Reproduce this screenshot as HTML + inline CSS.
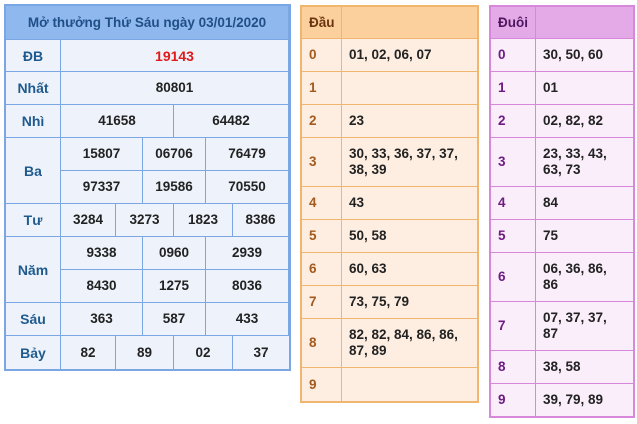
<!DOCTYPE html>
<html><head><meta charset="utf-8"><style>
body{margin:0;width:637px;height:424px;background:#fff;position:relative;overflow:hidden;font-family:"Liberation Sans",Arial,sans-serif;font-weight:bold;font-size:13.5px;color:#222}
.c{position:absolute;box-sizing:border-box;display:flex;align-items:center;justify-content:center;text-align:center;line-height:16px}
.L{background:#eef3fb;border-right:1px solid #7aa6e4;border-bottom:1px solid #7aa6e4}
.lab{color:#1f5a8e;font-size:14px}
.O{background:#fdeee1;border-right:1px solid #f0b56e;border-bottom:1px solid #f0b56e;justify-content:flex-start;padding-left:7px;text-align:left}
.P{background:#fbeefb;border-right:1px solid #d788da;border-bottom:1px solid #d788da;justify-content:flex-start;padding-left:7px;text-align:left}
.ol{color:#a35a1c}.pl{color:#6d1c82}
.box{position:absolute;box-sizing:border-box}
</style></head><body>
<div class="box" style="left:4px;top:4px;width:287px;height:367px;border:2px solid #7aa6e4"></div>
<div class="c L" style="left:6px;top:6px;width:283px;height:34px;background:#8fb8ef;color:#1f4f86;font-size:13.5px">Mở thưởng Thứ Sáu ngày 03/01/2020</div>
<div class="c L lab" style="left:6px;top:40px;width:55px;height:32px">ĐB</div>
<div class="c L" style="left:61px;top:40px;width:228px;height:32px;color:#e01a1a;font-size:14px">19143</div>
<div class="c L lab" style="left:6px;top:72px;width:55px;height:33px">Nhất</div>
<div class="c L" style="left:61px;top:72px;width:228px;height:33px">80801</div>
<div class="c L lab" style="left:6px;top:105px;width:55px;height:33px">Nhì</div>
<div class="c L" style="left:61px;top:105px;width:113px;height:33px">41658</div>
<div class="c L" style="left:174px;top:105px;width:115px;height:33px">64482</div>
<div class="c L lab" style="left:6px;top:138px;width:55px;height:66px">Ba</div>
<div class="c L" style="left:61px;top:138px;width:82px;height:33px">15807</div>
<div class="c L" style="left:143px;top:138px;width:63px;height:33px">06706</div>
<div class="c L" style="left:206px;top:138px;width:83px;height:33px">76479</div>
<div class="c L" style="left:61px;top:171px;width:82px;height:33px">97337</div>
<div class="c L" style="left:143px;top:171px;width:63px;height:33px">19586</div>
<div class="c L" style="left:206px;top:171px;width:83px;height:33px">70550</div>
<div class="c L lab" style="left:6px;top:204px;width:55px;height:33px">Tư</div>
<div class="c L" style="left:61px;top:204px;width:55px;height:33px">3284</div>
<div class="c L" style="left:116px;top:204px;width:58px;height:33px">3273</div>
<div class="c L" style="left:174px;top:204px;width:59px;height:33px">1823</div>
<div class="c L" style="left:233px;top:204px;width:56px;height:33px">8386</div>
<div class="c L lab" style="left:6px;top:237px;width:55px;height:66px">Năm</div>
<div class="c L" style="left:61px;top:237px;width:82px;height:33px">9338</div>
<div class="c L" style="left:143px;top:237px;width:63px;height:33px">0960</div>
<div class="c L" style="left:206px;top:237px;width:83px;height:33px">2939</div>
<div class="c L" style="left:61px;top:270px;width:82px;height:33px">8430</div>
<div class="c L" style="left:143px;top:270px;width:63px;height:33px">1275</div>
<div class="c L" style="left:206px;top:270px;width:83px;height:33px">8036</div>
<div class="c L lab" style="left:6px;top:303px;width:55px;height:33px">Sáu</div>
<div class="c L" style="left:61px;top:303px;width:82px;height:33px">363</div>
<div class="c L" style="left:143px;top:303px;width:63px;height:33px">587</div>
<div class="c L" style="left:206px;top:303px;width:83px;height:33px">433</div>
<div class="c L lab" style="left:6px;top:336px;width:55px;height:33px;border-bottom:0">Bảy</div>
<div class="c L" style="left:61px;top:336px;width:55px;height:33px;border-bottom:0">82</div>
<div class="c L" style="left:116px;top:336px;width:58px;height:33px;border-bottom:0">89</div>
<div class="c L" style="left:174px;top:336px;width:59px;height:33px;border-bottom:0">02</div>
<div class="c L" style="left:233px;top:336px;width:56px;height:33px;border-bottom:0;border-right:0">37</div>

<div class="box" style="left:300px;top:5px;width:179px;height:398px;border:2px solid #f0b56e"></div>
<div class="c O" style="left:302px;top:7px;width:40px;height:32px;background:#fbd09c;color:#6a3410">Đầu</div>
<div class="c O" style="left:342px;top:7px;width:135px;height:32px;background:#fbd09c;border-right:0"></div>
<div class="c O ol" style="left:302px;top:39px;width:40px;height:33px">0</div><div class="c O" style="left:342px;top:39px;width:135px;height:33px;border-right:0">01, 02, 06, 07</div>
<div class="c O ol" style="left:302px;top:72px;width:40px;height:33px">1</div><div class="c O" style="left:342px;top:72px;width:135px;height:33px;border-right:0"></div>
<div class="c O ol" style="left:302px;top:105px;width:40px;height:33px">2</div><div class="c O" style="left:342px;top:105px;width:135px;height:33px;border-right:0">23</div>
<div class="c O ol" style="left:302px;top:138px;width:40px;height:49px">3</div><div class="c O" style="left:342px;top:138px;width:135px;height:49px;border-right:0">30, 33, 36, 37, 37,<br>38, 39</div>
<div class="c O ol" style="left:302px;top:187px;width:40px;height:33px">4</div><div class="c O" style="left:342px;top:187px;width:135px;height:33px;border-right:0">43</div>
<div class="c O ol" style="left:302px;top:220px;width:40px;height:33px">5</div><div class="c O" style="left:342px;top:220px;width:135px;height:33px;border-right:0">50, 58</div>
<div class="c O ol" style="left:302px;top:253px;width:40px;height:33px">6</div><div class="c O" style="left:342px;top:253px;width:135px;height:33px;border-right:0">60, 63</div>
<div class="c O ol" style="left:302px;top:286px;width:40px;height:33px">7</div><div class="c O" style="left:342px;top:286px;width:135px;height:33px;border-right:0">73, 75, 79</div>
<div class="c O ol" style="left:302px;top:319px;width:40px;height:49px">8</div><div class="c O" style="left:342px;top:319px;width:135px;height:49px;border-right:0">82, 82, 84, 86, 86,<br>87, 89</div>
<div class="c O ol" style="left:302px;top:368px;width:40px;height:33px;border-bottom:0">9</div><div class="c O" style="left:342px;top:368px;width:135px;height:33px;border:0"></div>

<div class="box" style="left:489px;top:5px;width:146px;height:413px;border:2px solid #d788da"></div>
<div class="c P" style="left:491px;top:7px;width:45px;height:32px;background:#e4aae7;color:#4e1560">Đuôi</div>
<div class="c P" style="left:536px;top:7px;width:97px;height:32px;background:#e4aae7;border-right:0"></div>
<div class="c P pl" style="left:491px;top:39px;width:45px;height:33px">0</div><div class="c P" style="left:536px;top:39px;width:97px;height:33px;border-right:0">30, 50, 60</div>
<div class="c P pl" style="left:491px;top:72px;width:45px;height:33px">1</div><div class="c P" style="left:536px;top:72px;width:97px;height:33px;border-right:0">01</div>
<div class="c P pl" style="left:491px;top:105px;width:45px;height:33px">2</div><div class="c P" style="left:536px;top:105px;width:97px;height:33px;border-right:0">02, 82, 82</div>
<div class="c P pl" style="left:491px;top:138px;width:45px;height:49px">3</div><div class="c P" style="left:536px;top:138px;width:97px;height:49px;border-right:0">23, 33, 43,<br>63, 73</div>
<div class="c P pl" style="left:491px;top:187px;width:45px;height:33px">4</div><div class="c P" style="left:536px;top:187px;width:97px;height:33px;border-right:0">84</div>
<div class="c P pl" style="left:491px;top:220px;width:45px;height:33px">5</div><div class="c P" style="left:536px;top:220px;width:97px;height:33px;border-right:0">75</div>
<div class="c P pl" style="left:491px;top:253px;width:45px;height:49px">6</div><div class="c P" style="left:536px;top:253px;width:97px;height:49px;border-right:0">06, 36, 86,<br>86</div>
<div class="c P pl" style="left:491px;top:302px;width:45px;height:49px">7</div><div class="c P" style="left:536px;top:302px;width:97px;height:49px;border-right:0">07, 37, 37,<br>87</div>
<div class="c P pl" style="left:491px;top:351px;width:45px;height:33px">8</div><div class="c P" style="left:536px;top:351px;width:97px;height:33px;border-right:0">38, 58</div>
<div class="c P pl" style="left:491px;top:384px;width:45px;height:32px;border-bottom:0">9</div><div class="c P" style="left:536px;top:384px;width:97px;height:32px;border:0">39, 79, 89</div>
</body></html>
